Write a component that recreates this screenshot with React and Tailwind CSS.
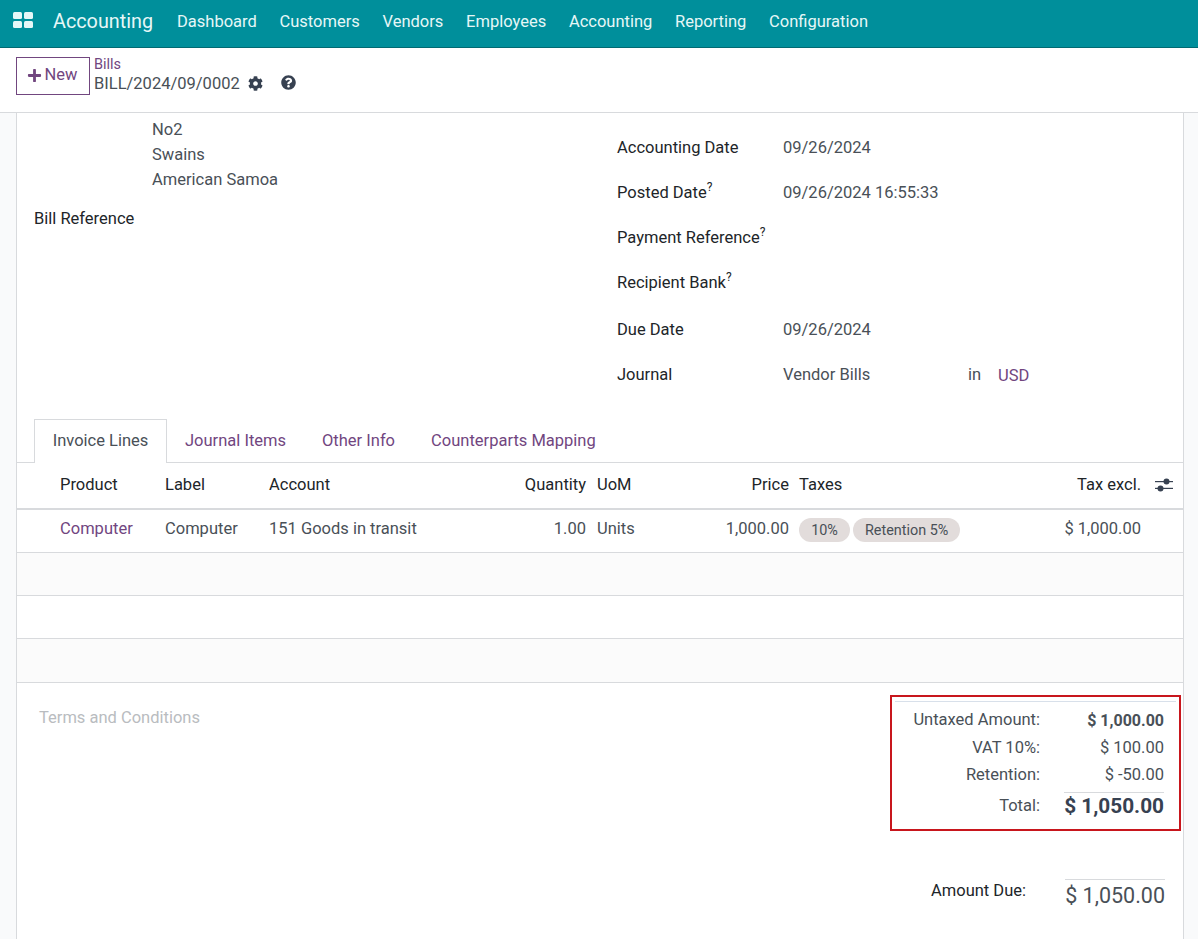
import React from 'react';
import { FaCog, FaPlus, FaQuestionCircle } from 'react-icons/fa';

const navItems = ['Dashboard', 'Customers', 'Vendors', 'Employees', 'Accounting', 'Reporting', 'Configuration'];
const lineCols = 'grid grid-cols-[38px_105px_104px_220px_108px_98px_104px_206px_146px_37px]';

function AppsIcon() {
    return (
        <svg width="20" height="16" viewBox="0 0 20 16" fill="#e6f7f7">
            <rect x="0" y="0" width="9" height="7" rx="1.5" />
            <rect x="11" y="0" width="9" height="7" rx="1.5" />
            <rect x="0" y="9" width="9" height="7" rx="1.5" />
            <rect x="11" y="9" width="9" height="7" rx="1.5" />
        </svg>
    );
}

function AdjustIcon() {
    return (
        <svg width="18" height="16" viewBox="0 0 18 16" fill="#374151">
            <rect x="0" y="4" width="18" height="1.2" />
            <rect x="0" y="10.8" width="18" height="1.2" />
            <circle cx="11.5" cy="4.6" r="3" />
            <circle cx="5.5" cy="11.4" r="3" />
        </svg>
    );
}

function Hint() {
    return <sup className="text-[12px] leading-none relative -top-[7px]">?</sup>;
}

function InfoRow({ label, hint, className, children }) {
    return (
        <div className={`flex items-center ${className}`}>
            <div className="w-[166px] text-[#212529]">
                {label}
                {hint && <Hint />}
            </div>
            {children}
        </div>
    );
}

function TotalRow({ label, value, className, valueClass }) {
    return (
        <div className={`flex items-center justify-end ${className}`}>
            <div>{label}</div>
            <div className={`w-[124px] text-right ${valueClass}`}>{value}</div>
        </div>
    );
}

export default function App() {
    return (
        <div className="h-[939px] overflow-hidden bg-white text-[16.5px] text-[#495057] font-['Roboto',sans-serif] flex flex-col">
            <header className="h-12 shrink-0 bg-[#008f9b] border-b border-[#016a72] flex items-center pb-[3px] text-[#e6f7f7]">
                <div className="ml-[13px] w-[40px] -mt-[5px]">
                    <AppsIcon />
                </div>
                <div className="text-[19.8px] w-[124px]">Accounting</div>
                <nav className="flex gap-[22.7px]">
                    {navItems.map((item) => (
                        <span key={item}>{item}</span>
                    ))}
                </nav>
            </header>

            <div className="h-[65px] shrink-0 bg-white border-b border-[#d8dadd] flex items-center pl-4 pb-[8px]">
                <button className="h-[38px] w-[74px] border border-[#71467f] text-[#71467f] flex items-center justify-center gap-[3px] pb-[2px] pr-[2px]">
                    <FaPlus size={15} />
                    New
                </button>
                <div className="ml-1 -mt-[1px]">
                    <div className="text-[14.5px] leading-[15px] text-[#71467f]">Bills</div>
                    <div className="flex items-center leading-5 mt-[2px] whitespace-nowrap">
                        BILL/2024/09/0002
                        <FaCog size={15} className="ml-2 -mt-[2px] text-[#374151]" />
                        <FaQuestionCircle size={15} className="ml-[18px] -mt-[3px] text-[#374151]" />
                    </div>
                </div>
            </div>

            <div className="flex-1 bg-[#f9fafb] pl-4 pr-[14px] overflow-hidden">
                <main className="h-full bg-white border-x border-[#d8dadd]">
                    <div className="h-[306px] flex">
                        <div className="w-[600px] pl-[135px] pt-[4px]">
                            <div className="leading-[25px]">
                                <div>No2</div>
                                <div>Swains</div>
                                <div>American Samoa</div>
                            </div>
                            <div className="-ml-[118px] mt-[14px] leading-[25px] text-[#212529]">Bill Reference</div>
                        </div>
                        <div className="pt-[23px]">
                            <InfoRow label="Accounting Date" className="h-[24px]">
                                09/26/2024
                            </InfoRow>
                            <InfoRow label="Posted Date" hint className="h-[24px] mt-[21px]">
                                09/26/2024 16:55:33
                            </InfoRow>
                            <InfoRow label="Payment Reference" hint className="h-[24px] mt-[21px]" />
                            <InfoRow label="Recipient Bank" hint className="h-[24px] mt-[21px]" />
                            <InfoRow label="Due Date" className="h-[24px] mt-[23px]">
                                09/26/2024
                            </InfoRow>
                            <InfoRow label="Journal" className="h-[24px] mt-[21px]">
                                <span className="w-[185px]">Vendor Bills</span>
                                <span className="w-[30px]">in</span>
                                <span className="text-[#71467f] mt-[2px]">USD</span>
                            </InfoRow>
                        </div>
                    </div>

                    <div className="h-[44px] border-b border-[#d8dadd] pl-[17px] flex">
                        <div className="h-[44px] w-[133px] bg-white border border-b-0 border-[#d8dadd] flex items-center justify-center">
                            Invoice Lines
                        </div>
                        <div className="flex items-center text-[#71467f] gap-9 pl-[18px] h-[44px]">
                            <span>Journal Items</span>
                            <span>Other Info</span>
                            <span>Counterparts Mapping</span>
                        </div>
                    </div>

                    <div className={`${lineCols} h-[47px] items-center border-b-2 border-[#d8dadd] text-[#212529]`}>
                        <div />
                        <div className="pl-[5px]">Product</div>
                        <div className="pl-[5px]">Label</div>
                        <div className="pl-[5px]">Account</div>
                        <div className="pr-[6px] text-right">Quantity</div>
                        <div className="pl-[5px]">UoM</div>
                        <div className="pr-[5px] text-right">Price</div>
                        <div className="pl-[5px]">Taxes</div>
                        <div className="pr-[5px] text-right">Tax excl.</div>
                        <div className="pl-[9px] -mt-[2px]">
                            <AdjustIcon />
                        </div>
                    </div>

                    <div className={`${lineCols} h-[43px] items-center border-b border-[#d8dadd] pb-[3px]`}>
                        <div />
                        <div className="pl-[5px] text-[#71467f]">Computer</div>
                        <div className="pl-[5px]">Computer</div>
                        <div className="pl-[5px]">151 Goods in transit</div>
                        <div className="pr-[6px] text-right">1.00</div>
                        <div className="pl-[5px]">Units</div>
                        <div className="pr-[5px] text-right">1,000.00</div>
                        <div className="pl-[5px] flex gap-[3px]">
                            <span className="h-6 w-[51px] text-center rounded-full bg-[#e2dcdb] text-[14.4px] leading-[26px] mt-px">10%</span>
                            <span className="h-6 px-3 rounded-full bg-[#e2dcdb] text-[14.4px] leading-[26px] mt-px">Retention 5%</span>
                        </div>
                        <div className="pr-[5px] text-right whitespace-nowrap">$ 1,000.00</div>
                        <div />
                    </div>
                    <div className="h-[43px] border-b border-[#d8dadd] bg-[#fbfbfb]" />
                    <div className="h-[43px] border-b border-[#d8dadd]" />
                    <div className="h-[44px] border-b border-[#d8dadd] bg-[#fbfbfb]" />

                    <div className="flex justify-between">
                        <div className="pl-[22px] pt-[23px] text-[#b9bcc0]">Terms and Conditions</div>
                        <div className="w-[291px] mr-[2px]">
                            <div className="mt-3 h-[136px] border-2 border-[#c8161d] px-[3px] pt-[4px]">
                                <div className="border-t border-[#d8e0ea] pr-[12px]">
                                    <TotalRow label="Untaxed Amount:" value="$ 1,000.00" className="h-[29px] mt-[4px]" valueClass="font-bold text-[16px]" />
                                    <TotalRow label="VAT 10%:" value="$ 100.00" className="h-[27px]" />
                                    <TotalRow label="Retention:" value="$ -50.00" className="h-[27px]" />
                                    <div className="flex items-center justify-end mt-[3px]">
                                        <div className="pt-[2px]">Total:</div>
                                        <div className="w-[100px] ml-[24px] border-t border-[#d8dadd] text-right text-[20.8px] font-bold leading-[26px] text-[#374151] whitespace-nowrap">$ 1,050.00</div>
                                    </div>
                                </div>
                            </div>
                            <div className="mt-[48px] flex items-start justify-end pr-[16px]">
                                <div className="text-[#212529] pt-[2px] leading-5">Amount Due:</div>
                                <div className="w-[100px] ml-[39px] border-t border-[#d8dadd] text-right text-[21.5px] leading-[32px] whitespace-nowrap">$ 1,050.00</div>
                            </div>
                        </div>
                    </div>
                </main>
            </div>
        </div>
    );
}
